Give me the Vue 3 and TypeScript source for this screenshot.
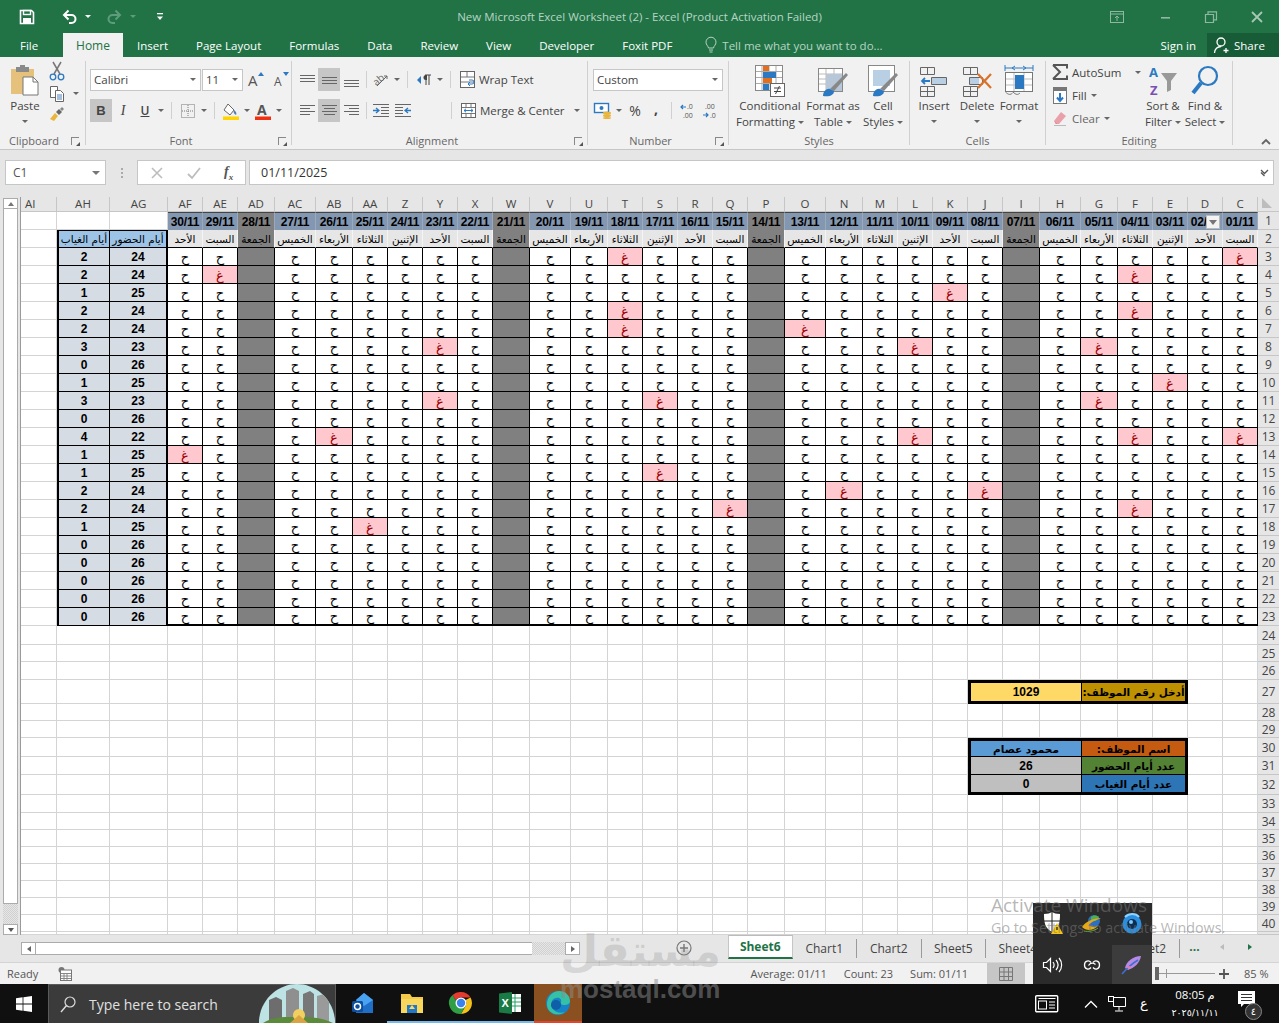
<script setup lang="ts">
import { computed } from 'vue'

type Cell = { key: string; cls: string; text: string; filter?: boolean }

// days run right to left, C is the first of the month
const dayCols = ['C','D','E','F','G','H','I','J','K','L','M','N','O','P','Q','R','S','T','U','V','W','X','Y','Z','AA','AB','AC','AD','AE','AF']
const dayNames = ['السبت','الأحد','الإثنين','الثلاثاء','الأربعاء','الخميس','الجمعة']
const weekWidths = [35,35,35,35,37,41,37]

const absences: Record<number, string[]> = {
  3: ['T','C'], 4: ['AE','F'], 5: ['K'], 6: ['T','F'], 7: ['O','T'], 8: ['Y','L','G'],
  10: ['E'], 11: ['Y','S','G'], 13: ['AB','L','F','C'], 14: ['AF'], 15: ['S'],
  16: ['N','J'], 17: ['Q','F'], 18: ['AA']
}

const rowHeights = [
  18,18,18,18,18,18,18,18,18,18,18,18,18,18,18,18,18,18,18,18,18,18,18,
  19,17,18,24,17,17,19,18,20,18,17,17,17,17,17,17,17,3
]

const summary: Record<number, { value: string; label: string; vc: string; lc: string }> = {
  27: { value: '1029', label: 'أدخل رقم الموظف:', vc: 'v-gold', lc: 'l-gold' },
  30: { value: 'محمود عصام', label: 'اسم الموظف:', vc: 'v-blue', lc: 'l-orange' },
  31: { value: '26', label: 'عدد أيام الحضور', vc: 'v-gray', lc: 'l-green' },
  32: { value: '0', label: 'عدد أيام الغياب', vc: 'v-gray', lc: 'l-blue' }
}

const displayCols = ['AI','AH','AG', ...[...dayCols].reverse()]

const colWidths = computed(() => {
  const days = dayCols.map((_, i) => weekWidths[i % 7]).reverse()
  return [36, 53, 58, ...days, 21]
})

const gridStyle = computed(() => ({
  gridTemplateColumns: colWidths.value.map(w => w + 'px').join(' '),
  gridTemplateRows: ['15px', ...rowHeights.map(h => h + 'px')].join(' ')
}))

const dayIndex = (col: string) => dayCols.indexOf(col)

const pad = (n: number) => String(n).padStart(2, '0')

const cells = computed<Cell[]>(() => {
  const out: Cell[] = []
  displayCols.forEach(c => out.push({ key: 'h' + c, cls: c === 'AI' ? 'col-head ai' : 'col-head', text: c }))
  out.push({ key: 'corner', cls: 'corner', text: '' })

  rowHeights.forEach((_, idx) => {
    const r = idx + 1
    displayCols.forEach(col => {
      const key = col + r
      const d = dayIndex(col)
      const friday = d >= 0 && d % 7 === 6
      if (d >= 0 && r === 1) {
        out.push({ key, cls: friday ? 'date fri' : 'date', text: `${pad(d + 1)}/11`, filter: col === 'D' })
      } else if (d >= 0 && r === 2) {
        out.push({ key, cls: friday ? 'day fri' : 'day', text: dayNames[d % 7] })
      } else if (d >= 0 && r <= 23) {
        const last = r === 23 ? ' last' : ''
        if (friday) out.push({ key, cls: 'mark fri' + last, text: '' })
        else if (absences[r]?.includes(col)) out.push({ key, cls: 'mark absent' + last, text: 'غ' })
        else out.push({ key, cls: 'mark' + last, text: 'ح' })
      } else if ((col === 'AH' || col === 'AG') && r === 2) {
        out.push({ key, cls: 'tot-head ' + col, text: col === 'AH' ? 'أيام الغياب' : 'أيام الحضور' })
      } else if ((col === 'AH' || col === 'AG') && r >= 3 && r <= 23) {
        const n = absences[r]?.length ?? 0
        out.push({ key, cls: 'tot ' + col, text: String(col === 'AH' ? n : 26 - n) })
      } else if (summary[r] && ['J','I','H','G','F','E'].includes(col)) {
        const s = summary[r]
        const edge = r === 27 ? ' single' : r === 30 ? ' top' : r === 32 ? ' bottom' : ''
        if (col === 'J') out.push({ key, cls: 'sum value span3 ' + s.vc + edge, text: s.value })
        if (col === 'G') out.push({ key, cls: 'sum label span3 ' + s.lc + edge, text: s.label })
      } else {
        out.push({ key, cls: 'plain', text: '' })
      }
    })
    out.push({ key: 'r' + r, cls: 'row-head', text: r < 41 ? String(r) : '' })
  })
  return out
})
</script>

<template>
  <div class="app">
    <div class="title-bar">
      <div class="qat">
        <svg class="i-save" width="16" height="16" viewBox="0 0 16 16"><path d="M1.5 1.5h11l2 2v11h-13z" fill="none" stroke="#fff" stroke-width="1.6"/><rect x="4.5" y="1.5" width="7" height="4" fill="none" stroke="#fff" stroke-width="1.4"/><rect x="4" y="9" width="8" height="5.5" fill="#fff"/></svg>
        <svg class="i-undo" width="16" height="16" viewBox="0 0 16 16"><path d="M2.5 6h7a4 4 0 0 1 0 8H7" fill="none" stroke="#fff" stroke-width="2"/><path d="M6.5 1.5L2 6l4.5 4.5" fill="none" stroke="#fff" stroke-width="2"/></svg>
        <i class="caret white qc"></i>
        <svg class="i-redo" width="16" height="16" viewBox="0 0 16 16"><path d="M13.5 6h-7a4 4 0 0 0 0 8H9" fill="none" stroke="#5e9c7c" stroke-width="2"/><path d="M9.5 1.5L14 6l-4.5 4.5" fill="none" stroke="#5e9c7c" stroke-width="2"/></svg>
        <i class="caret faded qc2"></i>
        <svg class="i-cust" width="8" height="9" viewBox="0 0 8 9"><rect x="1" y="1" width="6" height="1.3" fill="#fff"/><path d="M1 4.5h6L4 8z" fill="#fff"/></svg>
      </div>
      <div class="doc-title">New Microsoft Excel Worksheet (2) - Excel (Product Activation Failed)</div>
      <div class="win-btns">
        <svg width="14" height="12" viewBox="0 0 14 12"><rect x=".5" y=".5" width="13" height="11" fill="none" stroke="#8fb8a1"/><path d="M1 3h12M7 10V5M5 7l2-2 2 2" fill="none" stroke="#8fb8a1"/></svg>
        <svg class="wb-min" width="12" height="12" viewBox="0 0 12 12"><rect x="1" y="6" width="9" height="1.6" fill="#8fb8a1"/></svg>
        <svg class="wb-max" width="12" height="12" viewBox="0 0 12 12"><path d="M.5 3.5h8v8h-8zM3 3V.8h8.500v8H9" fill="none" stroke="#8fb8a1" stroke-width="1.200"/></svg>
        <svg class="wb-close" width="12" height="12" viewBox="0 0 12 12"><path d="M1 1l10 10M11 1L1 11" stroke="#a5c7b4" stroke-width="1.800"/></svg>
      </div>
    </div>

    <div class="tab-bar">
      <span class="tab file">File</span>
      <span class="tab home">Home</span>
      <span class="tab">Insert</span>
      <span class="tab">Page Layout</span>
      <span class="tab">Formulas</span>
      <span class="tab">Data</span>
      <span class="tab">Review</span>
      <span class="tab">View</span>
      <span class="tab">Developer</span>
      <span class="tab">Foxit PDF</span>
      <span class="tell">
        <svg width="12" height="16" viewBox="0 0 12 16"><path d="M3.500 11C3 8.500 1 8 1 5.200a5 5 0 0 1 10 0C11 8 9 8.500 8.500 11zM4 13h4M4.500 15h3" fill="none" stroke="#b7d3c3"/></svg>
        Tell me what you want to do...
      </span>
      <span class="sign-in">Sign in</span>
      <span class="share">
        <svg width="18" height="18" viewBox="0 0 18 18"><circle cx="8" cy="6" r="4" fill="none" stroke="#fff" stroke-width="1.300"/><path d="M1.500 17c0-4 3-6.500 6.500-6.500M13 12v5M10.500 14.500h5" fill="none" stroke="#fff" stroke-width="1.300"/></svg>
        Share
      </span>
    </div>

    <div class="ribbon">
      <!-- clipboard -->
      <div class="group g-clip">
        <div class="group-body row">
          <div class="big paste">
            <svg class="big-icon" width="30" height="30" viewBox="0 0 30 30"><rect x="1" y="4" width="23" height="25" fill="#e6c17c"/><rect x="6" y="2" width="13" height="5" fill="#8a8a8a"/><rect x="10" y="0" width="5" height="4" fill="#8a8a8a"/><path d="M13 12h10l5 5v13H13z" fill="#fff" stroke="#777"/><path d="M23 12v5h5" fill="none" stroke="#777"/></svg>
            <span class="big-text">Paste</span>
            <i class="caret"></i>
          </div>
          <div class="clip-col">
            <svg width="16" height="20" viewBox="0 0 16 20"><path d="M4 1l7 12M12 1L5 13" stroke="#777" stroke-width="1.500" fill="none"/><circle cx="4" cy="16" r="2.800" fill="none" stroke="#2b79c2" stroke-width="1.300"/><circle cx="12" cy="16" r="2.800" fill="none" stroke="#2b79c2" stroke-width="1.300"/></svg>
            <div class="copy-row">
              <svg width="16" height="17" viewBox="0 0 16 17"><path d="M1.500 1.500h7v11h-7z" fill="#fff" stroke="#666"/><path d="M6.500 5.500h5l3 3v8h-8z" fill="#fff" stroke="#666"/><path d="M8 10h5M8 12h5M8 14h5" stroke="#4a7ebb"/></svg>
              <i class="caret"></i>
            </div>
            <svg width="16" height="16" viewBox="0 0 16 16"><path d="M1 13l5-6 3 3-4 5z" fill="#e8b53d"/><path d="M7 6l3-3 3 3-3 3z" fill="#666"/><path d="M11 3l2-2 2 2-2 2z" fill="#888"/></svg>
          </div>
        </div>
        <div class="group-label left"><span>Clipboard</span><i class="launcher"></i></div>
      </div>

      <!-- font -->
      <div class="group g-font">
        <div class="group-body col">
          <div class="tool-row">
            <div class="combo font-name"><span>Calibri</span><i class="caret"></i></div>
            <div class="combo font-size"><span>11</span><i class="caret"></i></div>
            <svg class="grow" width="16" height="17" viewBox="0 0 16 17"><text x="0" y="15" font-size="15" fill="#555" font-family="Open Sans, sans-serif">A</text><path d="M10 5l3-4 3 4z" fill="#2b79c2"/></svg>
            <svg class="shrink" width="16" height="17" viewBox="0 0 16 17"><text x="1" y="15" font-size="12" fill="#555" font-family="Open Sans, sans-serif">A</text><path d="M10 1l3 4 3-4z" fill="#2b79c2"/></svg>
          </div>
          <div class="tool-row second">
            <span class="tb active serif-b">B</span>
            <span class="tb serif-i">I</span>
            <span class="tb under">U</span>
            <i class="tc"><i class="caret"></i></i>
            <i class="sep"></i>
            <span class="tb"><svg width="14" height="14" viewBox="0 0 14 14"><rect x=".5" y=".5" width="13" height="13" fill="none" stroke="#777" stroke-dasharray="1 1"/><path d="M7 1v12M1 7h12" stroke="#777" stroke-dasharray="1 1"/></svg></span>
            <i class="tc"><i class="caret"></i></i>
            <i class="sep"></i>
            <span class="tb"><svg width="18" height="18" viewBox="0 0 18 18"><path d="M6 2l6 6-4 5-6-5z" fill="#fff" stroke="#666"/><path d="M12 8c2 2 3 3 2 5-2-1-3-3-2-5z" fill="#4a7ebb"/><rect x="1" y="14.500" width="16" height="3.500" fill="#ffd400"/></svg></span>
            <i class="tc"><i class="caret"></i></i>
            <span class="tb"><svg width="18" height="18" viewBox="0 0 18 18"><text x="3" y="13" font-size="14" fill="#555" font-weight="700" font-family="Open Sans, sans-serif">A</text><rect x="1" y="14.500" width="16" height="3.500" fill="#f03010"/></svg></span>
            <i class="tc"><i class="caret"></i></i>
          </div>
        </div>
        <div class="group-label"><i></i><span>Font</span><i class="launcher"></i></div>
      </div>

      <!-- alignment -->
      <div class="group g-align">
        <div class="group-body col">
          <div class="tool-row">
            <span class="tb tall"><svg width="15" height="12" viewBox="0 0 15 12"><path d="M0 .5h15M0 3.500h15M0 6.500h15" stroke="#666"/></svg></span>
            <span class="tb tall active"><svg width="15" height="12" viewBox="0 0 15 12"><path d="M0 2.500h15M0 5.500h15M0 8.500h15" stroke="#666"/></svg></span>
            <span class="tb tall"><svg width="15" height="12" viewBox="0 0 15 12"><path d="M0 5.500h15M0 8.500h15M0 11.500h15" stroke="#666"/></svg></span>
            <i class="sep sep-a"></i>
            <span class="tb"><svg width="17" height="17" viewBox="0 0 17 17"><text x="0" y="12" font-size="10" fill="#666" font-family="Open Sans, sans-serif" transform="rotate(-40 6 9)">ab</text><path d="M4 15L14 5M14 5h-3M14 5v3" stroke="#666" fill="none"/></svg></span>
            <i class="tc"><i class="caret"></i></i>
            <i class="sep"></i>
            <span class="tb"><svg width="15" height="12" viewBox="0 0 15 12"><path d="M4 2L0 6l4 4z" fill="#2b79c2"/><path d="M8 1h6M9 1v10M12 1v10" stroke="#444"/><path d="M10 1h-1a2.500 2.500 0 0 0 0 5h1z" fill="#444"/></svg></span>
            <i class="tc"><i class="caret"></i></i>
            <i class="sep"></i>
            <span class="tb"><svg width="15" height="17" viewBox="0 0 15 17"><rect x=".5" y=".5" width="14" height="16" fill="#fff" stroke="#666"/><path d="M1 6h13M1 11h13M7 1v5" stroke="#777"/><path d="M9 9h3a1.500 1.500 0 0 1 0 4H8M10 11l-2 2 2 2" fill="none" stroke="#2b79c2"/></svg></span>
            <span class="tool-text">Wrap Text</span>
          </div>
          <div class="tool-row second">
            <span class="tb"><svg width="15" height="11" viewBox="0 0 15 11"><path d="M0 .5h15M0 3.500h10M0 6.500h15M0 9.500h10" stroke="#666"/></svg></span>
            <span class="tb active"><svg width="15" height="11" viewBox="0 0 15 11"><path d="M0 .5h15M2 3.500h11M0 6.500h15M2 9.500h11" stroke="#666"/></svg></span>
            <span class="tb"><svg width="15" height="11" viewBox="0 0 15 11"><path d="M0 .5h15M5 3.500h10M0 6.500h15M5 9.500h10" stroke="#666"/></svg></span>
            <i class="sep sep-a"></i>
            <span class="tb"><svg width="16" height="13" viewBox="0 0 16 13"><path d="M0 .5h16M8 3.500h8M8 6.500h8M8 9.500h8M0 12.500h16" stroke="#666"/><path d="M0 6.500h5M3 4l3 2.500L3 9" fill="none" stroke="#2b79c2" stroke-width="1.300"/></svg></span>
            <span class="tb"><svg width="16" height="13" viewBox="0 0 16 13"><path d="M0 .5h16M0 3.500h8M0 6.500h8M0 9.500h8M0 12.500h16" stroke="#666"/><path d="M16 6.500h-5M13 4l-3 2.500L13 9" fill="none" stroke="#2b79c2" stroke-width="1.300"/></svg></span>
            <i class="align-gap"></i>
            <i class="sep"></i>
            <span class="tb"><svg width="15" height="15" viewBox="0 0 15 15"><rect x=".5" y=".5" width="14" height="14" fill="#fff" stroke="#666"/><path d="M1 4.500h13M1 10.500h13M5 1v3.500M10 1v3.500M5 10.500V14M10 10.500V14" stroke="#777"/><path d="M3 7.500h9M5 5.800L3 7.500l2 1.700M10 5.800l2 1.700-2 1.700" fill="none" stroke="#2b79c2"/></svg></span>
            <span class="tool-text">Merge &amp; Center</span>
            <i class="caret merge-caret"></i>
          </div>
        </div>
        <div class="group-label"><i></i><span>Alignment</span><i class="launcher"></i></div>
      </div>

      <!-- number -->
      <div class="group g-num">
        <div class="group-body col">
          <div class="tool-row">
            <div class="combo num-format"><span>Custom</span><i class="caret"></i></div>
          </div>
          <div class="tool-row second">
            <span class="tb"><svg width="18" height="16" viewBox="0 0 18 16"><rect x=".5" y=".5" width="14" height="9" fill="#fff" stroke="#2b79c2" stroke-width="1.400"/><circle cx="7.500" cy="5" r="2" fill="#2b79c2"/><ellipse cx="13" cy="10" rx="4" ry="1.500" fill="#e8b53d"/><ellipse cx="13" cy="12.500" rx="4" ry="1.500" fill="#e8b53d"/><ellipse cx="13" cy="15" rx="4" ry="1" fill="#e8b53d"/></svg></span>
            <i class="tc"><i class="caret"></i></i>
            <span class="tb pct">%</span>
            <span class="tb comma">,</span>
            <i class="sep"></i>
            <span class="tb"><svg width="17" height="16" viewBox="0 0 17 16"><path d="M6 4H1M3 2L1 4l2 2" fill="none" stroke="#2b79c2" stroke-width="1.200"/><text x="7" y="6" font-size="7" fill="#555" font-family="Open Sans, sans-serif">.0</text><text x="3" y="15" font-size="7" fill="#555" font-family="Open Sans, sans-serif">.00</text></svg></span>
            <span class="tb"><svg width="17" height="16" viewBox="0 0 17 16"><text x="3" y="6" font-size="7" fill="#555" font-family="Open Sans, sans-serif">.00</text><path d="M1 12h5M4 10l2 2-2 2" fill="none" stroke="#2b79c2" stroke-width="1.200"/><text x="8" y="15" font-size="7" fill="#555" font-family="Open Sans, sans-serif">.0</text></svg></span>
          </div>
        </div>
        <div class="group-label"><i></i><span>Number</span><i class="launcher"></i></div>
      </div>

      <!-- styles -->
      <div class="group g-styles">
        <div class="group-body row">
          <div class="big cond">
            <svg class="big-icon" width="30" height="32" viewBox="0 0 30 32"><rect x=".5" y=".5" width="27" height="25" fill="#fff" stroke="#888"/><path d="M7 1v24M14 1v24M21 1v24M1 6.500h26M1 12.500h26M1 18.500h26" stroke="#aaa"/><rect x="8" y="1" width="6" height="5" fill="#e07020"/><rect x="8" y="7" width="13" height="6" fill="#2b79c2"/><rect x="8" y="13" width="9" height="5" fill="#e07020"/><rect x="8" y="19" width="6" height="6" fill="#2b79c2"/><rect x="15.500" y="18.500" width="14" height="13" fill="#fff" stroke="#666"/><path d="M19 23h7M19 26.500h7M24.500 21l-4 8" stroke="#444" fill="none"/></svg>
            <span class="big-text">Conditional</span>
            <span class="big-text">Formatting <i class="caret"></i></span>
          </div>
          <div class="big fmt-table">
            <svg class="big-icon" width="30" height="32" viewBox="0 0 30 32"><rect x=".5" y="3.500" width="24" height="23" fill="#fff" stroke="#888"/><path d="M1 9h23M1 14h23M1 19h23M8 4v22M16 4v22" stroke="#bbb"/><rect x="8" y="9" width="16" height="17" fill="#b8c7d8"/><path d="M12 24L28 8l2 2-14 16z" fill="#888"/><path d="M5 31c0-5 4-8 7-7l4 2c0 4-4 6-11 5z" fill="#2b79c2"/></svg>
            <span class="big-text">Format as</span>
            <span class="big-text">Table <i class="caret"></i></span>
          </div>
          <div class="big cell-styles">
            <svg class="big-icon" width="30" height="32" viewBox="0 0 30 32"><rect x=".5" y=".5" width="26" height="26" fill="#fff" stroke="#888"/><rect x="5" y="5" width="17" height="16" fill="#b8cfe4"/><path d="M12 24L28 8l2 2-14 16z" fill="#888"/><path d="M5 31c0-5 4-8 7-7l4 2c0 4-4 6-11 5z" fill="#2b79c2"/></svg>
            <span class="big-text">Cell</span>
            <span class="big-text">Styles <i class="caret"></i></span>
          </div>
        </div>
        <div class="group-label center"><span>Styles</span></div>
      </div>

      <!-- cells -->
      <div class="group g-cells">
        <div class="group-body row">
          <div class="big cell-btn">
            <svg class="big-icon" width="30" height="32" viewBox="0 0 30 32"><path d="M1.500 2.500h14v7h-14zM8.500 2.500v7M1.500 21.500h14v10h-14zM1.500 26.500h14M8.500 21.500v10M12.500 12.500h15v7h-15zM20 12.500v7" fill="none" stroke="#666"/><rect x="13" y="13" width="14" height="6" fill="#b8cfe4"/><path d="M11 16H3M6 13l-3 3 3 3" fill="none" stroke="#2b79c2" stroke-width="1.800"/></svg>
            <span class="big-text">Insert</span>
            <i class="caret"></i>
          </div>
          <div class="big cell-btn del">
            <svg class="big-icon" width="30" height="32" viewBox="0 0 30 32"><path d="M1.500 2.500h14v7h-14zM8.500 2.500v7M1.500 21.500h14v10h-14zM1.500 26.500h14M8.500 21.500v10M7.500 12.500h13v7h-13z" fill="none" stroke="#666"/><rect x="8" y="13" width="9" height="6" fill="#b8cfe4"/><path d="M16 9l13 14M29 9L16 23" stroke="#d9722a" stroke-width="2.200"/></svg>
            <span class="big-text">Delete</span>
            <i class="caret"></i>
          </div>
          <div class="big cell-btn fmt">
            <svg class="big-icon" width="30" height="32" viewBox="0 0 30 32"><path d="M1 3h28M1 0v6M29 0v6" stroke="#2b79c2"/><path d="M8 3l3-2M8 3l3 2M22 3l-3-2M22 3l-3 2" stroke="#2b79c2" fill="none"/><rect x="1.500" y="7.500" width="27" height="19" fill="#fff" stroke="#777"/><path d="M10 8v18M20 8v18M2 14h26M2 20h26" stroke="#bbb"/><rect x="11" y="10" width="9" height="14" fill="#2b79c2"/><path d="M1.500 27c3 3 5 3 7 1M9 27c3 3 5 3 7 1" fill="none" stroke="#777"/></svg>
            <span class="big-text">Format</span>
            <i class="caret"></i>
          </div>
        </div>
        <div class="group-label center"><span>Cells</span></div>
      </div>

      <!-- editing -->
      <div class="group g-edit">
        <div class="group-body row">
          <div class="edit-col">
            <div class="edit-row">
              <svg width="16" height="16" viewBox="0 0 16 16"><path d="M1 1h14v3.500M1 15h14v-3.500M1 1l7 7-7 7" fill="none" stroke="#555" stroke-width="2"/></svg>
              <span>AutoSum</span><i class="caret autosum-caret"></i>
            </div>
            <div class="edit-row">
              <svg width="14" height="17" viewBox="0 0 14 17"><rect x=".5" y=".5" width="13" height="16" fill="#fff" stroke="#777"/><rect x="1" y="1" width="12" height="3" fill="#777"/><path d="M7 6v8M4 10.500L7 14l3-3.500" fill="none" stroke="#2b79c2" stroke-width="2"/></svg>
              <span>Fill</span><i class="caret"></i>
            </div>
            <div class="edit-row">
              <svg width="14" height="15" viewBox="0 0 14 15"><path d="M1 10L8 1l5 4-7 8H3z" fill="#e9a0a8"/><path d="M1 10l3 3H3z" fill="#c77"/><path d="M1 14.500h12" stroke="#bbb"/></svg>
              <span class="clear-t">Clear</span><i class="caret"></i>
            </div>
          </div>
          <div class="big sort">
            <svg class="big-icon" width="30" height="32" viewBox="0 0 30 32"><text x="1" y="12" font-size="13" font-weight="700" fill="#2b79c2" font-family="Open Sans, sans-serif">A</text><text x="2" y="30" font-size="13" font-weight="700" fill="#7a4fb5" font-family="Open Sans, sans-serif">Z</text><path d="M13 8h16l-6 8v9l-4 2V16z" fill="#999"/></svg>
            <span class="big-text">Sort &amp;</span>
            <span class="big-text">Filter <i class="caret"></i></span>
          </div>
          <div class="big sort">
            <svg class="big-icon" width="30" height="32" viewBox="0 0 30 32"><circle cx="18" cy="11" r="9" fill="none" stroke="#2b79c2" stroke-width="2.200"/><path d="M11 18L3 28" stroke="#2b79c2" stroke-width="4"/></svg>
            <span class="big-text">Find &amp;</span>
            <span class="big-text">Select <i class="caret"></i></span>
          </div>
        </div>
        <div class="group-label center"><span>Editing</span></div>
      </div>

      <svg class="collapse" width="10" height="7" viewBox="0 0 10 7"><path d="M1 6l4-4 4 4" fill="none" stroke="#666" stroke-width="1.800"/></svg>
    </div>

    <div class="formula-bar">
      <div class="name-box"><span>C1</span><i class="caret big-c"></i></div>
      <div class="dots"></div>
      <div class="fx-box">
        <svg width="12" height="12" viewBox="0 0 12 12"><path d="M1 1l10 10M11 1L1 11" stroke="#bdbdbd" stroke-width="1.600"/></svg>
        <svg width="14" height="12" viewBox="0 0 14 12"><path d="M1 7l4 4 8-10" fill="none" stroke="#bdbdbd" stroke-width="1.800"/></svg>
        <span class="fx">f<sub>x</sub></span>
      </div>
      <div class="formula-input">
        <span>01/11/2025</span>
        <svg width="9" height="7" viewBox="0 0 9 7"><path d="M1 1l3.500 3.500L8 1M1 3.500L4.500 7" fill="none" stroke="#555" stroke-width="1.300"/></svg>
      </div>
    </div>

    <div class="sheet-wrap">
      <div class="vscroll">
        <span class="arrow-btn"><i class="tri up"></i></span>
        <span class="v-thumb"></span>
        <span class="v-track"></span>
        <span class="arrow-btn"><i class="tri down"></i></span>
      </div>
      <div class="grid" :style="gridStyle">
        <div v-for="c in cells" :key="c.key" class="cell" :class="c.cls">
          <span>{{ c.text }}</span>
          <i v-if="c.filter" class="filter"><i class="tri down small"></i></i>
        </div>
      </div>
    </div>

    <div class="tab-strip">
      <div class="hscroll">
        <span class="h-btn"><i class="tri left"></i></span>
        <span class="h-thumb"></span>
        <span class="h-track"></span>
        <span class="h-btn"><i class="tri right"></i></span>
      </div>
      <svg class="add-sheet" width="16" height="16" viewBox="0 0 16 16"><circle cx="8" cy="8" r="7" fill="none" stroke="#777" stroke-width="1.200"/><path d="M8 4v8M4 8h8" stroke="#777" stroke-width="1.400"/></svg>
      <div class="sheet-tabs">
        <span class="s-tab active">Sheet6</span>
        <span class="s-tab">Chart1</span>
        <span class="s-tab">Chart2</span>
        <span class="s-tab">Sheet5</span>
        <span class="s-tab">Sheet4</span>
        <span class="s-tab">Sheet3</span>
        <span class="s-tab">Sheet2</span>
        <span class="s-more">...</span>
        <i class="tri left muted"></i>
        <i class="tri right green"></i>
      </div>
    </div>

    <div class="status-bar">
      <span class="ready">Ready</span>
      <svg class="macro" width="14" height="14" viewBox="0 0 14 14"><circle cx="3.500" cy="3" r="3" fill="#777"/><rect x="2.500" y="3" width="11" height="10.500" fill="#fff" stroke="#777"/><path d="M3 6.500h10M3 9h10M3 11.500h10M6 6v7M9 6v7" stroke="#888"/></svg>
      <div class="stats">
        <span>Average: 01/11</span>
        <span>Count: 23</span>
        <span>Sum: 01/11</span>
      </div>
      <span class="view-btn"><svg width="14" height="14" viewBox="0 0 14 14"><path d="M.5.500h13v13H.5zM5 1v13M9.500 1v13M1 5h13M1 9.500h13" fill="none" stroke="#777"/></svg></span>
      <div class="zoom-ctl">
        <span class="z-thumb"></span>
        <span class="z-line"><i></i></span>
        <svg width="10" height="10" viewBox="0 0 10 10"><path d="M5 0v10M0 5h10" stroke="#555" stroke-width="1.800"/></svg>
        <span class="z-val">85 %</span>
      </div>
    </div>

    <div class="taskbar">
      <div class="start"><svg width="16" height="16" viewBox="0 0 16 16"><path d="M0 2.300L6.600 1.300v6.300H0zM7.400 1.200L16 0v7.600H7.400zM0 8.400h6.600v6.300L0 13.700zM7.400 8.400H16V16l-8.600-1.200z" fill="#fff"/></svg></div>
      <div class="search">
        <svg width="16" height="17" viewBox="0 0 16 17"><circle cx="10" cy="6" r="5" fill="none" stroke="#ddd" stroke-width="1.200"/><path d="M6.500 9.500L1 16" stroke="#ddd" stroke-width="1.400"/></svg>
        <span>Type here to search</span>
        <svg class="doodle" width="76" height="39" viewBox="0 0 76 39"><defs><clipPath id="dome"><path d="M0 39V36C2 14 20 0 38 0s36 14 38 36v3z"/></clipPath></defs><g clip-path="url(#dome)"><rect width="76" height="39" fill="#bde3e4"/><path d="M10 39V16l7-3 6 3v23z" fill="#6d6d6d"/><path d="M27 39V7l7-3 6 3v32z" fill="#8f8f8f"/><path d="M44 39V10l7-3 4 3v29z" fill="#777"/><path d="M58 39V12l7-2 5 2v27z" fill="#9a9a9a"/><path d="M4 39c10-6 18-6 30-6s26-1 40 6z" fill="#5b8a3a"/><circle cx="40" cy="31" r="6" fill="#f2d060"/><path d="M31 39l9-8 9 8z" fill="#d9a441"/></g></svg>
      </div>
      <div class="apps">
        <span class="app-i">
          <svg width="24" height="24" viewBox="0 0 24 24"><path d="M5 9l8-7 9 7v13H5z" fill="#1f6fc9"/><path d="M5 9l8-7 9 7-9 6z" fill="#4aa3f0"/><rect x="1" y="10" width="11" height="11" rx="1.500" fill="#0c4f9c"/><circle cx="6.500" cy="15.500" r="3" fill="none" stroke="#fff" stroke-width="1.500"/></svg>
        </span>
        <span class="app-i run">
          <svg width="24" height="22" viewBox="0 0 24 22"><path d="M1 2h9l2 3h11v16H1z" fill="#f5c94a"/><rect x="1" y="7" width="22" height="14" fill="#f9d65c"/><rect x="7" y="13" width="10" height="8" fill="#1f78c8"/><path d="M9 17l3-4 3 4z" fill="#ffd667"/></svg>
        </span>
        <span class="app-i run">
          <svg width="24" height="24" viewBox="0 0 24 24"><path d="M12 1a11 11 0 0 1 9.500 5.500H12a5.500 5.500 0 0 0-5 3.200L3.500 4A11 11 0 0 1 12 1z" fill="#e33b2e"/><path d="M21.500 6.500A11 11 0 0 1 12 23l4.700-8.200A5.500 5.500 0 0 0 16.500 9z" fill="#f6c21a"/><path d="M12 23A11 11 0 0 1 3.500 4L8 11.500a5.500 5.500 0 0 0 8.700 3.300z" fill="#2f9e44"/><circle cx="12" cy="12" r="5.500" fill="#fff"/><circle cx="12" cy="12" r="4.200" fill="#3a82ee"/></svg>
        </span>
        <span class="app-i run">
          <svg width="24" height="24" viewBox="0 0 24 24"><rect x="10" y="3" width="13" height="18" fill="#fff"/><path d="M10 7h13M10 11h13M10 15h13M17 3v18" stroke="#21a366"/><path d="M1 2.500l13-1.500v22L1 21.500z" fill="#1a7a45"/><text x="3.500" y="16" font-size="11" font-weight="700" fill="#fff" font-family="Liberation Sans, sans-serif">X</text></svg>
        </span>
        <span class="app-i edge">
          <svg width="26" height="26" viewBox="0 0 26 26"><circle cx="13" cy="13" r="12" fill="#1683c9"/><path d="M2 13C3 5 9 1 14 1c7 0 11 5 11 10 0 3-3 4-6 4-2 0-4-1-3-3 1-3-2-5-5-4-5 1-6 7-3 11 2 3 7 5 12 3-6 5-19 2-18-9z" fill="#35c1a5"/><circle cx="11" cy="15" r="5" fill="#0f5ea8"/></svg>
        </span>
      </div>
      <div class="tray">
        <svg class="news" width="24" height="18" viewBox="0 0 24 18"><rect x=".7" y=".7" width="22" height="16" rx="1" fill="none" stroke="#fff" stroke-width="1.400"/><rect x="3.500" y="6" width="8" height="8" fill="none" stroke="#fff"/><path d="M3.500 3.500h17M14 7h6M14 10h6M14 13h6" stroke="#fff"/></svg>
        <svg class="chev" width="14" height="8" viewBox="0 0 14 8"><path d="M1 7.500l6-6 6 6" fill="none" stroke="#fff" stroke-width="1.300"/></svg>
        <svg class="net" width="18" height="16" viewBox="0 0 18 16"><path d="M5.500 1.500h12v9h-12zM11 10.500v4M7 15h8" fill="none" stroke="#fff"/><rect x=".5" y=".5" width="5" height="5" fill="#101010" stroke="#fff"/></svg>
        <span class="lang">ع</span>
        <div class="clock">
          <span class="time">08:05 م</span>
          <span class="date-t">٢٠٢٥/١١/١١</span>
        </div>
        <svg class="notif" width="26" height="28" viewBox="0 0 26 28"><path d="M1 1h17v13H7l-3 3v-3H1z" fill="#fff"/><path d="M4 4.500h11M4 7.500h11M4 10.500h11" stroke="#333"/></svg>
        <span class="badge">٤</span>
      </div>
    </div>

    <div class="tray-pop">
      <div class="pop-cell">
        <svg width="22" height="24" viewBox="0 0 22 24"><path d="M2 2c4 0 6-1 8-2 2 1 4 2 8 2 0 9-1 14-8 18C3 16 2 11 2 2z" fill="#fff"/><path d="M10 0v20M2 9h16" stroke="#222"/><path d="M15 11l6 11H9z" fill="#f5c518"/><path d="M15 15v3" stroke="#222" stroke-width="1.300"/></svg>
      </div>
      <div class="pop-cell">
        <svg width="22" height="22" viewBox="0 0 22 22"><circle cx="13" cy="8" r="6" fill="#2b6fc2"/><path d="M10 4c2-2 6-2 8 0l-3 4h-5z" fill="#4caf50"/><path d="M1 14c3-5 11-9 19-9-4 2-9 3-12 7 2 2 5 2 9 1-5 5-12 5-16 1z" fill="#e6a817"/><path d="M3 18c4 1 10 0 14-3" stroke="#6a3" fill="none"/></svg>
      </div>
      <div class="pop-cell">
        <svg width="22" height="24" viewBox="0 0 22 24"><circle cx="11" cy="12" r="9.500" fill="#2a8fe0"/><circle cx="11" cy="12" r="5" fill="#0d2e4f"/><circle cx="10" cy="10" r="2" fill="#7cc8ff"/><path d="M4 5c4-4 11-4 14 0" stroke="#8fd4ff" stroke-width="2" fill="none"/></svg>
      </div>
      <div class="pop-cell">
        <svg width="22" height="18" viewBox="0 0 22 18"><path d="M1.500 6.500h3l4-4v13l-4-4h-3z" fill="none" stroke="#fff" stroke-width="1.200"/><path d="M11 6c1.500 2 1.500 4 0 6M14 4c2.500 3 2.500 7 0 10M17 2c3.500 4 3.500 10 0 14" fill="none" stroke="#fff" stroke-width="1.200"/></svg>
      </div>
      <div class="pop-cell">
        <svg width="18" height="12" viewBox="0 0 18 12"><path d="M8 3.500C6 1 1.500 1.500 1.500 6S6 11 8 8.500M10 8.500c2 2.500 6.500 2 6.500-2.500S12 1 10 3.500" fill="none" stroke="#fff" stroke-width="1.300"/><path d="M5.500 6.500c2-3 5-3 7-1" fill="none" stroke="#fff" stroke-width="1.300"/></svg>
      </div>
      <div class="pop-cell hl">
        <svg width="22" height="20" viewBox="0 0 22 20"><path d="M20 1C12 1 5 7 4 13l3 2C13 13 19 8 20 1z" fill="#b88ae8"/><path d="M17 5C12 8 7 12 1 19" stroke="#3b6fd0" stroke-width="1.500" fill="none"/><path d="M5 12l3 2 3-2-3-1z" fill="#e080b0"/></svg>
      </div>
    </div>

    <div class="activate">
      <div class="act-a">Activate Windows</div>
      <div class="act-b">Go to Settings to activate Windows.</div>
    </div>

    <div class="wm">
      <div class="wm-ar">مستقل</div>
      <div class="wm-en">mostaql.com</div>
    </div>
  </div>
</template>

<style>
html, body { margin: 0; padding: 0; background: #e6e6e6; overflow: hidden; }
</style>

<style scoped>
.app {
  position: relative;
  width: 1279px;
  height: 1023px;
  overflow: hidden;
  background: #e6e6e6;
  font-family: "Open Sans", "DejaVu Sans", sans-serif;
  font-size: 11.5px;
  color: #444;
}
.app svg { overflow: visible; }

/* window chrome */
.title-bar {
  height: 33px;
  background: #217346;
  display: flex;
  align-items: center;
  position: relative;
}
.qat { display: flex; align-items: center; padding-left: 19px; }
.i-undo { margin-left: 27px; }
.qc { margin-left: 7px; }
.i-redo { margin-left: 15px; }
.qc2 { margin-left: 8px; }
.i-cust { margin-left: 20px; }
.doc-title { position: absolute; left: 0; right: 0; text-align: center; color: #b8d3c4; font-size: 11.5px; }
.win-btns { margin-left: auto; display: flex; align-items: center; padding-right: 16px; }
.wb-min { margin-left: 36px; }
.wb-max { margin-left: 33px; }
.wb-close { margin-left: 34px; }

.tab-bar {
  height: 24px;
  background: #217346;
  display: flex;
  align-items: stretch;
  color: #fff;
}
.tab { display: flex; align-items: center; padding: 0 14px; white-space: nowrap; }
.tab.file { padding: 0 13px 0 20px; width: 63px; box-sizing: border-box; }
.tab.home { background: #f1f1f1; color: #217346; width: 60px; box-sizing: border-box; justify-content: center; padding: 0; font-size: 12px; }
.tell { display: flex; align-items: center; gap: 5px; margin-left: 19px; color: #b7d3c3; }
.sign-in { margin-left: auto; display: flex; align-items: center; }
.share {
  display: flex;
  align-items: center;
  gap: 3px;
  margin-left: 11px;
  width: 72px;
  box-sizing: border-box;
  padding-left: 6px;
  background: #185c37;
}

/* ribbon */
.ribbon {
  height: 88px;
  background: #f1f1f1;
  border-bottom: 1px solid #c6c6c6;
  display: flex;
  padding-top: 4px;
  position: relative;
}
.group {
  height: 84px;
  border-right: 1px solid #d0d0d0;
  box-sizing: border-box;
  display: flex;
  flex-direction: column;
  flex: none;
}
.g-clip { width: 86px; }
.g-font { width: 206px; }
.g-align { width: 296px; }
.g-num { width: 141px; }
.g-styles { width: 181px; }
.g-cells { width: 136px; }
.g-edit { width: 187px; }
.group-body { flex: 1; min-height: 0; }
.group-body.row { display: flex; }
.group-body.col { display: flex; flex-direction: column; padding-top: 7px; padding-left: 4px; }
.group-label {
  height: 15px;
  display: grid;
  grid-template-columns: 1fr auto 1fr;
  align-items: center;
  color: #666;
  font-size: 11px;
  line-height: 15px;
  padding-right: 15px;
  margin-bottom: -3px;
}
.group-label.left { display: flex; justify-content: space-between; padding: 0 6px 0 9px; }
.group-label.center { grid-template-columns: 1fr; justify-items: center; padding: 0; }
.launcher {
  justify-self: end;
  width: 7px;
  height: 7px;
  border-left: 1px solid #888;
  border-top: 1px solid #888;
  position: relative;
  margin-right: -10px;
}
.group-label.left .launcher { margin-right: 0; }
.launcher::after {
  content: "";
  position: absolute;
  right: -1px;
  bottom: -1px;
  border: 2px solid transparent;
  border-right-color: #555;
  border-bottom-color: #555;
}
.caret {
  display: inline-block;
  width: 0;
  height: 0;
  border: 3px solid transparent;
  border-top: 3px solid #666;
  border-bottom: 0;
  vertical-align: middle;
}
.caret.white { border-top-color: #fff; }
.caret.faded { border-top-color: #5e9c7c; }
.caret.big-c { border-width: 4px 4px 0; border-top-color: #777; }

.big { display: flex; flex-direction: column; align-items: center; flex: none; color: #444; }
.big-icon { height: 32px; margin-top: 4px; margin-bottom: 1px; flex: none; }
.big-text { line-height: 16px; white-space: nowrap; }
.big > .caret { margin-top: 6px; }
.paste { width: 42px; margin-left: 4px; }
.paste .big-icon { margin-bottom: 3px; height: 30px; }
.clip-col { display: flex; flex-direction: column; align-items: flex-start; margin-left: 3px; gap: 4px; padding-top: 0; }
.copy-row { display: flex; align-items: center; gap: 8px; }
.tool-row { display: flex; align-items: center; height: 23px; flex: none; }
.tool-row.second { margin-top: 8px; }
.combo {
  height: 22px;
  box-sizing: border-box;
  background: #fff;
  border: 1px solid #c6c6c6;
  display: flex;
  align-items: center;
  justify-content: space-between;
  padding: 0 4px 0 3px;
  flex: none;
  color: #444;
}
.font-name { width: 111px; }
.font-size { width: 41px; margin-left: 1px; }
.grow { margin-left: 5px; }
.shrink { margin-left: 9px; }
.num-format { width: 130px; margin-left: 1px; }
.tb {
  width: 22px;
  height: 23px;
  display: flex;
  align-items: center;
  justify-content: center;
  flex: none;
  color: #444;
}
.tb.active { background: #c6c6c6; }
.tb.tall svg { margin-top: 2px; }
.tc { width: 10px; display: flex; justify-content: center; flex: none; font-style: normal; }
.sep { width: 1px; height: 17px; background: #d0d0d0; margin: 0 5px; flex: none; display: block; }
.sep-a { margin: 0 3px 0 4px; }
.serif-b { font-family: "Liberation Sans", serif; font-weight: 700; font-size: 13px; color: #444; }
.serif-i { font-family: "Liberation Serif", serif; font-style: italic; font-size: 14px; }
.under { text-decoration: underline; font-weight: 600; font-size: 12px; }
.align-gap { width: 32px; flex: none; }
.tool-text { margin-left: 1px; white-space: nowrap; }
.merge-caret { margin-left: 9px; }
.pct { font-size: 14px; color: #444; }
.comma { font-weight: 700; font-size: 14px; align-items: flex-start; width: 20px; }
.cond { width: 74px; margin-left: 4px; }
.fmt-table { width: 52px; }
.cell-styles { width: 48px; }
.cell-btn { width: 44px; margin-left: 2px; }
.cell-btn.del { width: 42px; margin-left: 0; }
.cell-btn.fmt { width: 42px; margin-left: 0; }
.edit-col { width: 96px; padding-left: 6px; box-sizing: border-box; display: flex; flex-direction: column; gap: 5px; padding-top: 2px; flex: none; }
.edit-row { display: flex; align-items: center; height: 18px; gap: 4px; white-space: nowrap; }
.edit-row svg { width: 16px; flex: none; }
.autosum-caret { margin-left: 10px; }
.clear-t { color: #666; }
.sort { width: 42px; }
.collapse { position: absolute; right: 8px; bottom: 4px; }

/* formula bar */
.formula-bar {
  height: 47px;
  box-sizing: border-box;
  padding: 10px 5px 12px;
  display: flex;
  background: #e6e6e6;
  font-size: 12px;
}
.name-box, .fx-box, .formula-input {
  background: #fff;
  border: 1px solid #c6c6c6;
  box-sizing: border-box;
  height: 25px;
  display: flex;
  align-items: center;
  flex: none;
}
.name-box { width: 101px; padding: 0 5px 0 7px; justify-content: space-between; color: #555; }
.dots { width: 31px; flex: none; position: relative; }
.dots::before {
  content: "";
  position: absolute;
  left: 15px;
  top: 8px;
  width: 2px;
  height: 10px;
  background: repeating-linear-gradient(#aaa 0 2px, transparent 2px 4px);
}
.fx-box { width: 109px; padding-left: 13px; gap: 24px; }
.fx { font-family: "Liberation Serif", serif; font-style: italic; color: #555; font-size: 14px; font-weight: 700; margin-left: -1px; }
.fx sub { font-size: 9px; }
.formula-input { flex: 1; margin-left: 3px; justify-content: space-between; padding: 0 4px 0 11px; color: #333; font-size: 12.500px; }

/* sheet */
.sheet-wrap { display: flex; height: 738px; background: #e6e6e6; }
.vscroll { width: 21px; flex: none; box-sizing: border-box; padding: 1px 3px 0; display: flex; flex-direction: column; }
.arrow-btn {
  height: 11px;
  width: 15px;
  flex: none;
  border: 1px solid #ababab;
  box-sizing: border-box;
  background: #fff;
  display: flex;
  align-items: center;
  justify-content: center;
}
.v-thumb { height: 695px; width: 15px; box-sizing: border-box; border: 1px solid #ababab; border-top: 0; background: #fff; flex: none; }
.v-track { flex: 1; width: 15px; background: repeating-conic-gradient(#d0d0d0 0 25%, #e6e6e6 0 50%) 0 0 / 2px 2px; }
.tri { display: block; width: 0; height: 0; border: 3px solid transparent; }
.tri.up { border-bottom: 4px solid #777; border-top: 0; }
.tri.down { border-top: 4px solid #555; border-bottom: 0; }
.tri.left { border-right: 4px solid #666; border-left: 0; }
.tri.right { border-left: 4px solid #666; border-right: 0; }
.tri.muted { border-right-color: #bbb; }
.tri.green { border-left-color: #217346; }
.grid { display: grid; flex: none; width: 1258px; overflow: hidden; background: #fff; border-left: 1px solid #9a9a9a; margin-left: -1px; box-sizing: content-box; }

.cell {
  box-sizing: border-box;
  display: flex;
  align-items: center;
  justify-content: center;
  overflow: hidden;
  position: relative;
  white-space: nowrap;
  font-family: "Liberation Sans", "DejaVu Sans", sans-serif;
  color: #000;
}
.col-head {
  background: #e6e6e6;
  border-right: 1px solid #c6c6c6;
  border-bottom: 1px solid #c6c6c6;
  color: #444;
  font-family: "Open Sans", sans-serif;
  font-size: 11.500px;
  line-height: 14px;
}
.col-head.ai { justify-content: flex-start; padding-left: 4px; }
.corner { background: #e6e6e6; border-bottom: 1px solid #c6c6c6; }
.corner::after {
  content: "";
  position: absolute;
  left: 4px;
  bottom: 3px;
  border-left: 10px solid #bdbdbd;
  border-top: 10px solid transparent;
}
.row-head {
  background: #e6e6e6;
  border-bottom: 1px solid #c6c6c6;
  color: #444;
  font-family: "Open Sans", sans-serif;
  font-size: 12px;
  line-height: 15px;
}
.plain { border-right: 1px solid #d4d4d4; border-bottom: 1px solid #d4d4d4; }
.date {
  background: #8497b0;
  border-top: 1px solid #444;
  border-right: 1px solid #9aa9be;
  font-weight: 700;
  font-size: 12px;
  letter-spacing: -0.2px;
}
.date.fri { background: #808080; }
.filter {
  position: absolute;
  right: 2px;
  top: 2px;
  width: 14px;
  height: 14px;
  box-sizing: border-box;
  background: #f3f3f3;
  border: 1px solid #bbb;
  display: flex;
  align-items: center;
  justify-content: center;
}
.tri.small { border-width: 5px 4px 0; border-top-color: #777; }
.day {
  background: #e7e6e6;
  border-right: 1px solid #f4f4f4;
  border-bottom: 1px solid #000;
  font-family: "DejaVu Sans", sans-serif;
  font-size: 10.500px;
  line-height: 15px;
  padding-top: 1px;
}
.day.fri { background: #808080; }
.mark {
  background: #fff;
  border-right: 1px solid #000;
  border-bottom: 1px solid #000;
  font-family: "DejaVu Sans", sans-serif;
  font-size: 13px;
  line-height: 15px;
  padding-top: 1px;
}
.mark.fri { background: #808080; }
.mark.absent { background: #ffc7ce; color: #9c0006; }
.mark.last { border-bottom-width: 2px; }
.tot-head {
  background: #9dc3e6;
  border-top: 1px solid #000;
  border-bottom: 1px solid #000;
  border-right: 1px solid #000;
  font-family: "DejaVu Sans", sans-serif;
  font-size: 10.500px;
  line-height: 15px;
  padding-top: 1px;
}
.tot-head.AH { border-left: 2px solid #000; }
.tot-head.AG { border-right: 2px solid #000; }
.tot {
  background: #d6dce4;
  border-right: 1px solid #000;
  border-bottom: 1px solid #000;
  font-weight: 700;
  font-size: 12px;
  padding-top: 1px;
}
.tot.AH { border-left: 2px solid #000; }
.tot.AG { border-right: 2px solid #000; }
.span3 { grid-column: span 3; }
.sum { font-size: 12px; font-weight: 700; border-bottom: 1px solid #000; }
.sum.label { font-family: "DejaVu Sans", sans-serif; font-size: 10.500px; border-right: 3px solid #000; border-left: 1px solid #000; direction: rtl; }
.sum.value { border-left: 3px solid #000; }
.sum.value.v-blue { font-family: "DejaVu Sans", sans-serif; font-size: 10.500px; }
.sum.single { border-top: 3px solid #000; border-bottom: 3px solid #000; }
.sum.top { border-top: 3px solid #000; }
.sum.bottom { border-bottom: 3px solid #000; }
.v-gold { background: #ffd966; }
.l-gold { background: #bf9000; }
.v-blue { background: #5b9bd5; }
.l-orange { background: #c55a11; }
.v-gray { background: #bfbfbf; }
.l-green { background: #548235; }
.l-blue { background: #2e75b6; }

/* sheet tabs */
.tab-strip { height: 27px; display: flex; background: #e6e6e6; position: relative; font-size: 12px; }
.hscroll { display: flex; margin: 7px 0 0 21px; height: 13px; width: 559px; flex: none; }
.h-btn {
  width: 15px;
  flex: none;
  background: #fff;
  border: 1px solid #ababab;
  box-sizing: border-box;
  display: flex;
  align-items: center;
  justify-content: center;
}
.h-thumb { width: 496px; background: #fff; box-sizing: border-box; border-top: 1px solid #ababab; border-bottom: 1px solid #ababab; flex: none; }
.h-track { flex: 1; background: repeating-conic-gradient(#d0d0d0 0 25%, #e6e6e6 0 50%) 0 0 / 2px 2px; }
.add-sheet { margin: 5px 0 0 96px; flex: none; }
.sheet-tabs { display: flex; align-items: stretch; margin-left: 36px; height: 24px; color: #444; }
.s-tab {
  width: 64.500px;
  box-sizing: border-box;
  display: flex;
  align-items: center;
  justify-content: center;
  position: relative;
  margin-top: 4px;
  height: 19px;
  border-right: 1px solid #9a9a9a;
}
.s-tab.active {
  background: #fff;
  color: #217346;
  font-weight: 700;
  margin-top: 0;
  height: 24px;
  border: 1px solid #c6c6c6;
  border-top: 1px solid #bbb;
  border-bottom: 2px solid #217346;
}
.s-more { width: 30px; display: flex; align-items: center; justify-content: center; color: #217346; font-weight: 700; padding-bottom: 2px; box-sizing: border-box; }
.sheet-tabs > .tri { align-self: center; }
.sheet-tabs > .tri.left { margin-left: 10px; }
.sheet-tabs > .tri.right { margin-left: 24px; }

/* status bar */
.status-bar {
  height: 22px;
  background: #f1f1f1;
  border-top: 1px solid #d4d4d4;
  box-sizing: border-box;
  display: flex;
  align-items: center;
  font-size: 11px;
  color: #555;
}
.ready { margin-left: 7px; width: 51px; flex: none; }
.macro { flex: none; }
.stats { width: 915px; flex: none; display: flex; justify-content: flex-end; gap: 17px; padding-right: 19px; box-sizing: border-box; white-space: nowrap; }
.view-btn { width: 38px; height: 21px; background: #c6c6c6; display: flex; align-items: center; justify-content: center; flex: none; }
.zoom-ctl { margin-left: 130px; display: flex; align-items: center; flex: none; }
.z-thumb { width: 4px; height: 13px; background: #666; flex: none; }
.z-line { width: 56px; height: 1px; background: #999; position: relative; margin-right: 4px; flex: none; }
.z-line i { position: absolute; left: 7px; top: -4px; width: 1px; height: 9px; background: #999; }
.z-val { margin-left: 15px; color: #555; white-space: nowrap; }

/* windows taskbar */
.taskbar { height: 39px; background: #101010; display: flex; align-items: stretch; }
.start { width: 48px; display: flex; align-items: center; justify-content: center; flex: none; }
.search {
  width: 288px;
  flex: none;
  background: #3b3b3b;
  box-sizing: border-box;
  border: 1px solid #5a5a5a;
  border-bottom: 0;
  display: flex;
  align-items: center;
  padding-left: 11px;
  color: #e0e0e0;
  font-size: 14px;
  position: relative;
}
.search span { margin-left: 13px; }
.doodle { position: absolute; right: 0; bottom: 0; }
.apps { display: flex; margin-left: 2px; }
.app-i { width: 49px; display: flex; align-items: center; justify-content: center; box-sizing: border-box; border-bottom: 2px solid transparent; flex: none; }
.app-i.run { border-bottom-color: #76b9ed; }
.app-i.edge { width: 48px; background: #8a5020; border-bottom-color: #e8432d; }
.tray { flex: 1; display: flex; align-items: center; position: relative; color: #fff; }
.news { margin-left: 453px; flex: none; }
.chev { margin-left: 25px; flex: none; }
.net { margin-left: 10px; flex: none; }
.lang { margin-left: 14px; font-family: "DejaVu Sans", sans-serif; font-size: 13px; flex: none; width: 10px; }
.clock { margin-left: 10px; width: 70px; display: flex; flex-direction: column; align-items: center; font-size: 11.500px; line-height: 18px; flex: none; }
.date-t { font-family: "DejaVu Sans", sans-serif; font-size: 9.500px; }
.notif { margin-left: 7px; flex: none; }
.badge {
  position: absolute;
  right: 17px;
  bottom: 3px;
  width: 15px;
  height: 15px;
  border-radius: 50%;
  background: #333;
  border: 1px solid #888;
  font-size: 10px;
  line-height: 13px;
  display: flex;
  align-items: center;
  justify-content: center;
  font-family: "DejaVu Sans", sans-serif;
  color: #fff;
}

/* overlays */
.tray-pop {
  position: absolute;
  left: 1033px;
  top: 903px;
  width: 119px;
  height: 81px;
  background: #2b2b2b;
  display: grid;
  grid-template-columns: repeat(3, 1fr);
  grid-template-rows: 42px 39px;
}
.pop-cell { display: flex; align-items: center; justify-content: center; }
.pop-cell.hl { background: #3c3c3c; }
.activate { position: absolute; left: 991px; top: 892px; color: rgba(120,120,120,.55); white-space: nowrap; font-family: "Open Sans", sans-serif; }
.act-a { font-size: 19px; line-height: 26px; }
.act-b { font-size: 14.300px; line-height: 20px; }
.wm { position: absolute; left: 560px; top: 923px; width: 160px; text-align: center; pointer-events: none; }
.wm-ar { font-family: "DejaVu Sans", sans-serif; font-weight: 700; font-size: 44px; line-height: 56px; color: rgba(120,120,120,.22); }
.wm-en { font-family: "Liberation Sans", sans-serif; font-weight: 700; font-size: 26px; line-height: 26px; color: rgba(140,140,140,.5); margin-top: -3px; }
</style>
